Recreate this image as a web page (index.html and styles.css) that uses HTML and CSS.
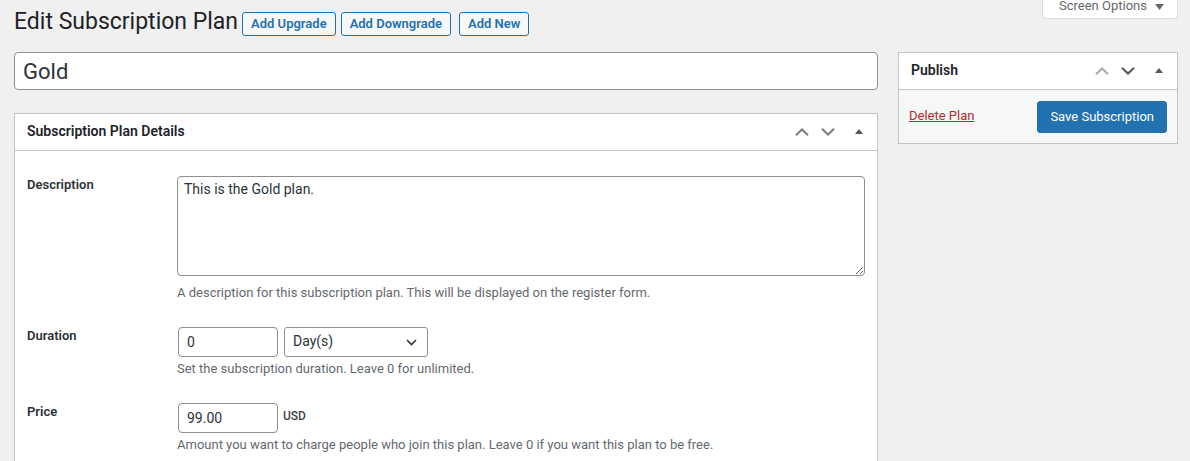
FILE: index.html
```html
<!DOCTYPE html>
<html lang="en">
<head>
<meta charset="utf-8">
<title>Edit Subscription Plan</title>
<link rel="stylesheet" href="styles.css">
</head>
<body>
<div class="wrap">
  <div class="page-header">
    <h1 class="page-title">Edit Subscription Plan</h1>
    <div class="title-actions">
      <a class="title-action" href="#">Add Upgrade</a>
      <a class="title-action" href="#">Add Downgrade</a>
      <a class="title-action title-action--spaced" href="#">Add New</a>
    </div>
    <button class="screen-options" type="button">Screen Options
      <svg class="screen-options__arrow" width="9" height="6" viewBox="0 0 9 6"><polygon points="0,0 9,0 4.5,6" fill="#646970"/></svg>
    </button>
  </div>

  <div class="columns">
    <div class="main-col">
      <input class="title-input" type="text" value="Gold">

      <div class="postbox postbox--details">
        <div class="postbox__header">
          <h2 class="postbox__title">Subscription Plan Details</h2>
          <div class="postbox__controls">
            <span class="handle-btn"><svg width="14" height="8" viewBox="0 0 14 8"><polyline points="1,7.2 7,1.5 13,7.2" fill="none" stroke="#787c82" stroke-width="2"/></svg></span>
            <span class="handle-btn"><svg width="14" height="8" viewBox="0 0 14 8"><polyline points="1,0.8 7,6.5 13,0.8" fill="none" stroke="#787c82" stroke-width="2"/></svg></span>
            <span class="toggle-btn"><svg width="8" height="5" viewBox="0 0 8 5"><polygon points="0,5 8,5 4,0" fill="#50575e"/></svg></span>
          </div>
        </div>
        <div class="postbox__body">
          <div class="form-row">
            <label class="form-label">Description</label>
            <div class="form-field">
              <textarea class="textarea">This is the Gold plan.</textarea>
              <p class="description description--after-textarea">A description for this subscription plan. This will be displayed on the register form.</p>
            </div>
          </div>
          <div class="form-row">
            <label class="form-label">Duration</label>
            <div class="form-field">
              <div class="inline-controls">
                <input class="text-input" type="text" value="0">
                <div class="select">
                  <span class="select__value">Day(s)</span>
                  <svg class="select__arrow" width="11" height="7" viewBox="0 0 11 7"><polyline points="1,1 5.5,5.5 10,1" fill="none" stroke="#2c3338" stroke-width="1.6"/></svg>
                </div>
              </div>
              <p class="description">Set the subscription duration. Leave 0 for unlimited.</p>
            </div>
          </div>
          <div class="form-row">
            <label class="form-label">Price</label>
            <div class="form-field">
              <div class="inline-controls inline-controls--price">
                <input class="text-input" type="text" value="99.00">
                <span class="currency">USD</span>
              </div>
              <p class="description">Amount you want to charge people who join this plan. Leave 0 if you want this plan to be free.</p>
            </div>
          </div>
        </div>
      </div>
    </div>

    <div class="side-col">
      <div class="postbox postbox--publish">
        <div class="postbox__header">
          <h2 class="postbox__title">Publish</h2>
          <div class="postbox__controls">
            <span class="handle-btn"><svg width="14" height="8" viewBox="0 0 14 8"><polyline points="1,7.2 7,1.5 13,7.2" fill="none" stroke="#a7aaad" stroke-width="2"/></svg></span>
            <span class="handle-btn"><svg width="14" height="8" viewBox="0 0 14 8"><polyline points="1,0.8 7,6.5 13,0.8" fill="none" stroke="#50575e" stroke-width="2"/></svg></span>
            <span class="toggle-btn"><svg width="8" height="5" viewBox="0 0 8 5"><polygon points="0,5 8,5 4,0" fill="#50575e"/></svg></span>
          </div>
        </div>
        <div class="publish-actions">
          <a class="delete-link" href="#">Delete Plan</a>
          <button class="button-primary" type="button">Save Subscription</button>
        </div>
      </div>
    </div>
  </div>
</div>
</body>
</html>
```

FILE: styles.css
```css
* { box-sizing: border-box; }

html, body {
  margin: 0;
  padding: 0;
}

body {
  background: #f0f0f1;
  color: #1d2327;
  font-family: Roboto, "Liberation Sans", sans-serif;
  font-size: 13px;
  line-height: 1.4;
  overflow: hidden;
}

.wrap {
  padding: 0 12px 0 14px;
}

.page-header {
  display: flex;
  align-items: center;
  padding-top: 7px;
  margin-bottom: 15px;
}

.page-title {
  margin: 0;
  font-size: 23px;
  font-weight: 400;
  line-height: 30px;
  color: #1d2327;
}

.title-actions {
  display: flex;
  align-items: center;
  margin-left: 4px;
  gap: 5px;
  padding-top: 3px;
}

.title-action {
  display: inline-block;
  height: 24px;
  line-height: 22px;
  padding: 0 8px;
  border: 1px solid #2271b1;
  border-radius: 3px;
  background: #f6f7f7;
  color: #2271b1;
  font-size: 13px;
  font-weight: 600;
  text-decoration: none;
}

.title-action--spaced { margin-left: 3px; }

.screen-options {
  margin-left: auto;
  align-self: flex-start;
  margin-top: -17px;
  width: 136px;
  height: 29px;
  padding: 4px 0 0 16px;
  display: flex;
  align-items: center;
  gap: 8px;
  background: #fff;
  border: 1px solid #dcdcde;
  border-top: none;
  border-radius: 0 0 4px 4px;
  color: #646970;
  font-family: inherit;
  font-size: 13px;
  line-height: 18px;
  text-align: left;
}

.screen-options__arrow { margin-top: 1px; }

.columns {
  display: flex;
  gap: 20px;
  align-items: flex-start;
}

.main-col {
  flex: 1;
  min-width: 0;
  display: flex;
  flex-direction: column;
  gap: 23px;
}

.side-col {
  width: 280px;
  flex: none;
}

.title-input {
  display: block;
  width: 100%;
  height: 38px;
  padding: 0 8px;
  border: 1px solid #8c8f94;
  border-radius: 4px;
  background: #fff;
  color: #2c3338;
  font-family: inherit;
  font-size: 22px;
  line-height: 1;
}

.postbox {
  background: #fff;
  border: 1px solid #c3c4c7;
}

.postbox__header {
  display: flex;
  align-items: center;
  justify-content: space-between;
  height: 37px;
  border-bottom: 1px solid #c3c4c7;
}

.postbox__title {
  margin: 0;
  padding: 0 12px;
  font-size: 14px;
  font-weight: 600;
  line-height: 1.4;
  color: #1d2327;
}

.postbox__controls {
  display: flex;
  align-items: center;
  height: 100%;
}

.handle-btn {
  width: 26px;
  height: 36px;
  display: flex;
  align-items: center;
  justify-content: center;
}

.toggle-btn {
  width: 36px;
  height: 36px;
  display: flex;
  align-items: center;
  justify-content: center;
  padding-bottom: 1px;
}

.postbox__body {
  padding: 25px 12px 60px;
  display: flex;
  flex-direction: column;
  gap: 25px;
}

.form-row {
  display: flex;
}

.form-label {
  width: 150px;
  flex: none;
  font-size: 13px;
  font-weight: 600;
  line-height: 18px;
  color: #2c3338;
}

.form-field {
  flex: 1;
  min-width: 0;
}

.textarea {
  display: block;
  width: 100%;
  height: 100px;
  padding: 2px 6px;
  border: 1px solid #8c8f94;
  border-radius: 4px;
  background: #fff;
  color: #2c3338;
  font-family: inherit;
  font-size: 14px;
  line-height: 20px;
  resize: vertical;
}

.description {
  margin: 3px 0 0;
  color: #646970;
  font-size: 13px;
  line-height: 18px;
}

.description--after-textarea { margin-top: 8px; }

.inline-controls {
  display: flex;
  align-items: center;
  gap: 6px;
}

.inline-controls--price {
  gap: 5px;
}

.text-input {
  width: 100px;
  height: 30px;
  margin-left: 1px;
  padding: 0 8px;
  border: 1px solid #8c8f94;
  border-radius: 4px;
  background: #fff;
  color: #2c3338;
  font-family: inherit;
  font-size: 14px;
  line-height: 2;
}

.select {
  width: 144px;
  height: 30px;
  display: flex;
  align-items: center;
  justify-content: space-between;
  padding: 0 10px 0 8px;
  border: 1px solid #8c8f94;
  border-radius: 3px;
  background: #fff;
  color: #2c3338;
  font-size: 14px;
}

.currency {
  margin-top: -3px;
  font-size: 12px;
  font-weight: 500;
  color: #3c434a;
}

.publish-actions {
  display: flex;
  align-items: center;
  justify-content: space-between;
  padding: 11px 10px 10px;
  background: #f6f7f7;
}

.delete-link {
  color: #b32d2e;
  font-size: 13px;
  text-decoration: underline;
  margin-top: -2px;
}

.button-primary {
  height: 32px;
  padding: 0 12px;
  border: 1px solid #2271b1;
  border-radius: 3px;
  background: #2271b1;
  color: #fff;
  font-family: inherit;
  font-size: 13px;
  line-height: 30px;
}
```
